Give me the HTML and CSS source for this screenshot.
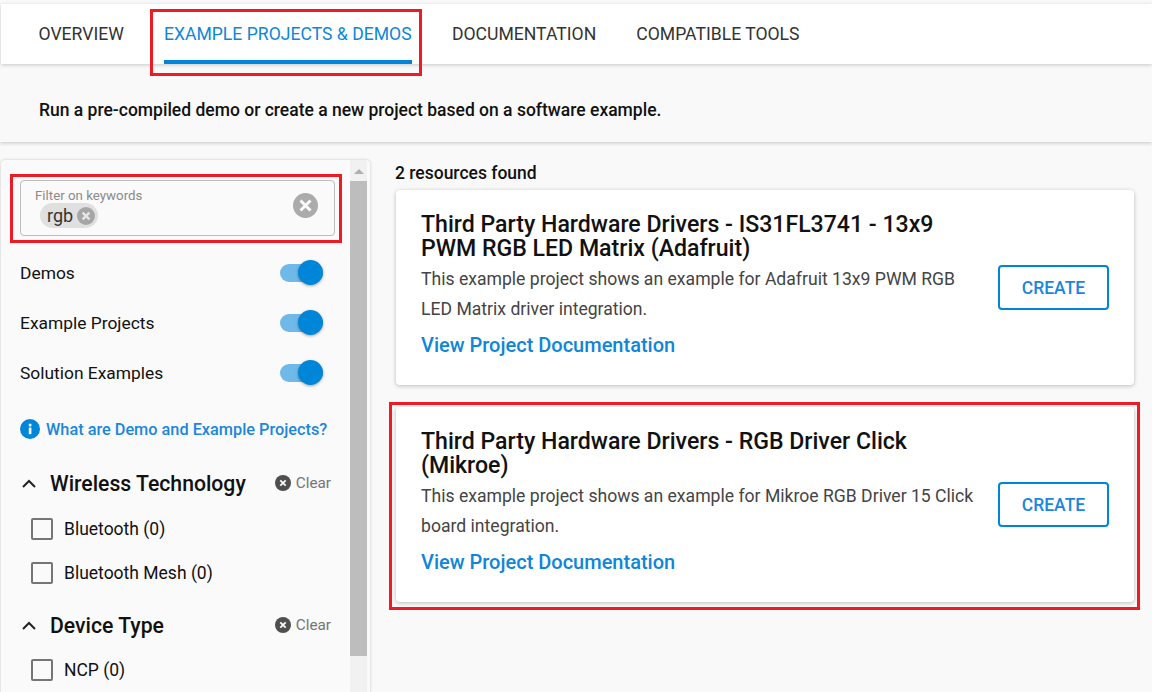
FILE: index.html
```html
<!DOCTYPE html>
<html lang="en">
<head>
    <meta charset="UTF-8">
    <meta name="viewport" content="width=device-width, initial-scale=1.0">
    <title>Example Projects &amp; Demos</title>
    <link rel="stylesheet" href="styles.css">
</head>
<body>
    <nav class="tabs">
        <a class="tab">OVERVIEW</a>
        <a class="tab active">EXAMPLE PROJECTS &amp; DEMOS</a>
        <a class="tab">DOCUMENTATION</a>
        <a class="tab">COMPATIBLE TOOLS</a>
    </nav>

    <div class="intro">Run a pre-compiled demo or create a new project based on a software example.</div>

    <div class="content">
        <aside class="sidebar">
            <div class="filters">
                <div class="keyword-box">
                    <span class="keyword-label">Filter on keywords</span>
                    <span class="chip">rgb
                        <svg class="chip-x" viewBox="0 0 18 18"><circle cx="9" cy="9" r="9" fill="#a6a6a6"/><path d="M5.6 5.6l6.8 6.8M12.4 5.6l-6.8 6.8" stroke="#e6e6e6" stroke-width="2.4"/></svg>
                    </span>
                    <svg class="keyword-clear" viewBox="0 0 25 25"><circle cx="12.5" cy="12.5" r="12.5" fill="#ababab"/><path d="M7.5 7.5l10 10M17.5 7.5l-10 10" stroke="#fafafa" stroke-width="3"/></svg>
                </div>

                <div class="toggle-row"><span>Demos</span><span class="toggle"><span class="thumb"></span></span></div>
                <div class="toggle-row"><span>Example Projects</span><span class="toggle"><span class="thumb"></span></span></div>
                <div class="toggle-row"><span>Solution Examples</span><span class="toggle"><span class="thumb"></span></span></div>

                <div class="info-row">
                    <svg class="info-icon" viewBox="0 0 20 20"><circle cx="10" cy="10" r="10" fill="#0086d9"/><rect x="8.8" y="8.6" width="2.6" height="6.6" fill="#fff"/><rect x="8.8" y="4.8" width="2.6" height="2.6" fill="#fff"/></svg>
                    <a class="info-link">What are Demo and Example Projects?</a>
                </div>

                <div class="group-head">
                    <svg class="chevron" viewBox="0 0 14 9"><path d="M1 8l6-6 6 6" fill="none" stroke="#222" stroke-width="2"/></svg>
                    <span class="group-title">Wireless Technology</span>
                    <span class="clear">
                        <svg class="clear-icon" viewBox="0 0 16 16"><circle cx="8" cy="8" r="8" fill="#4f4f4f"/><path d="M5.3 5.3l5.4 5.4M10.7 5.3l-5.4 5.4" stroke="#fafafa" stroke-width="1.8"/></svg>
                        Clear
                    </span>
                </div>
                <label class="check-row"><span class="box"></span>Bluetooth (0)</label>
                <label class="check-row"><span class="box"></span>Bluetooth Mesh (0)</label>

                <div class="group-head second">
                    <svg class="chevron" viewBox="0 0 14 9"><path d="M1 8l6-6 6 6" fill="none" stroke="#222" stroke-width="2"/></svg>
                    <span class="group-title">Device Type</span>
                    <span class="clear">
                        <svg class="clear-icon" viewBox="0 0 16 16"><circle cx="8" cy="8" r="8" fill="#4f4f4f"/><path d="M5.3 5.3l5.4 5.4M10.7 5.3l-5.4 5.4" stroke="#fafafa" stroke-width="1.8"/></svg>
                        Clear
                    </span>
                </div>
                <label class="check-row"><span class="box"></span>NCP (0)</label>
            </div>
            <div class="scrollbar">
                <span class="scroll-up"></span>
                <span class="scroll-thumb"></span>
            </div>
        </aside>

        <main class="results">
            <div class="count">2 resources found</div>

            <section class="card">
                <div class="card-text">
                    <h2>Third Party Hardware Drivers - IS31FL3741 - 13x9 PWM RGB LED Matrix (Adafruit)</h2>
                    <p>This example project shows an example for Adafruit 13x9 PWM RGB LED Matrix driver integration.</p>
                    <a class="doc-link">View Project Documentation</a>
                </div>
                <button class="create">CREATE</button>
            </section>

            <section class="card">
                <div class="card-text">
                    <h2>Third Party Hardware Drivers - RGB Driver Click (Mikroe)</h2>
                    <p>This example project shows an example for Mikroe RGB Driver 15 Click board integration.</p>
                    <a class="doc-link">View Project Documentation</a>
                </div>
                <button class="create">CREATE</button>
            </section>
        </main>
    </div>

    <!-- red annotation boxes drawn over the screenshot -->
    <div class="mark mark-tab"></div>
    <div class="mark mark-filter"></div>
    <div class="mark mark-card"></div>
</body>
</html>
```

FILE: styles.css
```css
* {
    box-sizing: border-box;
}
html, body {
    height: 692px;
    overflow: hidden;
}
body {
    margin: 0;
    padding-top: 4px;
    position: relative;
    font-family: Roboto, "Liberation Sans", sans-serif;
    font-size: 17.4px;
    color: #111;
    background-color: #f9f9f9;
}

/* tabs */
.tabs {
    display: flex;
    gap: 40px;
    height: 60px;
    margin-left: 1px;
    padding-left: 37.5px;
    background-color: #fff;
    box-shadow: 0 1px 4px rgba(0, 0, 0, 0.2);
    position: relative;
}
.tab {
    height: 60px;
    padding-top: 20px;
    font-size: 17.6px;
    line-height: 21px;
    color: #333;
    white-space: nowrap;
}
.tab.active {
    width: 248px;
    color: #0f86d8;
    border-bottom: 4px solid #0086d9;
}

.intro {
    height: 78px;
    padding: 36px 0 0 39px;
    font-size: 17.5px;
    line-height: 21px;
    font-weight: 500;
    color: #111;
    box-shadow: 0 2px 3px rgba(0, 0, 0, 0.14);
}

.content {
    display: flex;
    margin-top: 18px;
    height: 532px;
}

/* sidebar */
.sidebar {
    display: flex;
    width: 369px;
    margin-left: 1px;
    background-color: #fafafa;
    border-radius: 4px 4px 0 0;
    box-shadow: 0 0 3px rgba(0, 0, 0, 0.22);
}
.filters {
    width: 349px;
    padding: 20px 0 0 19px;
}
.scrollbar {
    display: flex;
    flex-direction: column;
    align-items: center;
    width: 17px;
    background-color: #f1f1f1;
}
.scroll-up {
    width: 0;
    height: 0;
    margin-top: 9px;
    border-left: 5px solid transparent;
    border-right: 5px solid transparent;
    border-bottom: 5px solid #b0b0b0;
}
.scroll-thumb {
    width: 17px;
    height: 475px;
    margin-top: 7px;
    background-color: #bdbdbd;
}

.keyword-box {
    position: relative;
    width: 315px;
    height: 56px;
    border: 1px solid #bdbdbd;
    border-radius: 4px;
    padding: 8px 0 0 14px;
}
.keyword-label {
    display: block;
    font-size: 13.3px;
    line-height: 14px;
    color: #8a8a8a;
}
.chip {
    display: inline-flex;
    align-items: center;
    gap: 4px;
    height: 25px;
    margin: 0 0 0 5px;
    padding: 0 3px 0 7px;
    background-color: #e0e0e0;
    border-radius: 13px;
    font-size: 18px;
    color: #333;
}
.chip-x {
    width: 18px;
    height: 18px;
}
.keyword-clear {
    position: absolute;
    right: 16px;
    top: 12px;
    width: 25px;
    height: 25px;
}

.toggle-row {
    display: flex;
    justify-content: space-between;
    align-items: center;
    width: 303px;
    height: 50px;
}
.keyword-box + .toggle-row {
    margin-top: 12px;
}
.toggle {
    position: relative;
    width: 43px;
    height: 18px;
    background-color: #6fb9e9;
    border-radius: 9px;
}
.thumb {
    position: absolute;
    right: 0;
    top: -4px;
    width: 25px;
    height: 25px;
    background-color: #0086d9;
    border-radius: 50%;
    box-shadow: 0 1px 3px rgba(0, 0, 0, 0.35);
}

.info-row {
    display: flex;
    align-items: center;
    gap: 6px;
    margin-top: 11px;
    height: 40px;
}
.info-icon {
    width: 20px;
    height: 20px;
    flex-shrink: 0;
}
.info-link {
    font-size: 16.3px;
    font-weight: 500;
    color: #1a87dc;
    white-space: nowrap;
}

.group-head {
    display: flex;
    align-items: center;
    width: 311px;
    height: 30px;
    margin-top: 19px;
}
.group-head.second {
    margin-top: 15px;
}
.chevron {
    width: 14px;
    height: 9px;
    margin: 0 14px 0 2px;
}
.group-title {
    font-size: 21.2px;
    font-weight: 500;
    color: #111;
    white-space: nowrap;
}
.clear {
    display: flex;
    align-items: center;
    gap: 5px;
    margin-left: auto;
    font-size: 15.3px;
    color: #757575;
}
.clear-icon {
    width: 16px;
    height: 16px;
}

.check-row {
    display: flex;
    align-items: center;
    height: 44px;
    padding-left: 11px;
    font-size: 17.5px;
    color: #111;
}
.group-head + .check-row {
    margin-top: 9px;
}
.group-head.second + .check-row {
    margin-top: 8px;
}
.box {
    width: 22px;
    height: 22px;
    margin-right: 11px;
    border: 2px solid #757575;
    border-radius: 2px;
}

/* results */
.results {
    width: 738px;
    margin-left: 26px;
}
.count {
    height: 30px;
    margin-left: -1px;
    font-size: 17.5px;
    font-weight: 500;
    line-height: 26px;
    color: #111;
}
.card {
    display: flex;
    align-items: center;
    justify-content: space-between;
    height: 195px;
    margin-bottom: 22px;
    padding: 0 25px;
    background-color: #fff;
    border-radius: 4px;
    box-shadow: 0 1px 4px rgba(0, 0, 0, 0.25);
}
.card-text {
    width: 555px;
    padding-bottom: 6px;
}
.card h2 {
    margin: 0;
    padding-top: 1px;
    font-size: 23.1px;
    font-weight: 500;
    line-height: 24px;
    color: #111;
}
.card p {
    margin: 3px 0 0;
    font-size: 17.6px;
    line-height: 30px;
    color: #444;
}
.doc-link {
    display: block;
    margin-top: 9px;
    font-size: 20px;
    font-weight: 500;
    line-height: 24px;
    color: #0f86d8;
}
.create {
    width: 111px;
    height: 45px;
    background-color: #fff;
    border: 2px solid #0086d9;
    border-radius: 4px;
    font-family: inherit;
    font-size: 17.5px;
    font-weight: 500;
    color: #1a87dc;
}

/* annotations */
.mark {
    position: absolute;
    border: 3px solid #ed1c24;
    pointer-events: none;
}
.mark-tab {
    left: 150px;
    top: 9px;
    width: 272px;
    height: 67px;
}
.mark-filter {
    left: 10px;
    top: 174px;
    width: 332px;
    height: 69px;
}
.mark-card {
    left: 389px;
    top: 402px;
    width: 751px;
    height: 208px;
}
```
